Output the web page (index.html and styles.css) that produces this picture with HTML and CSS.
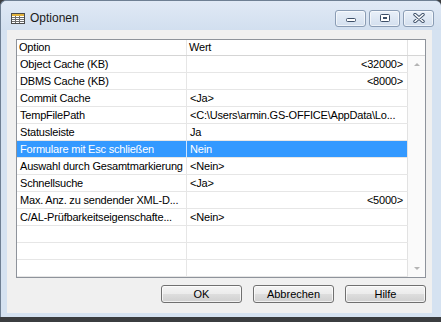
FILE: index.html
```html
<!DOCTYPE html>
<html lang="de">
<head>
  <meta charset="UTF-8">
  <title>Optionen</title>
  <link rel="stylesheet" href="styles.css">
</head>
<body>

<div class="window">
  <div class="titlebar">
    <svg class="app-icon" width="14" height="11" viewBox="0 0 14 11">
      <rect x="0.5" y="0.5" width="13" height="10" fill="#fff" stroke="#4b4b4b"/>
      <rect x="1" y="1" width="12" height="2" fill="#e2b23c"/>
      <path d="M1 4.5H13M1 6.5H13M1 8.5H13M4.5 3V10M8.5 3V10" stroke="#6d6d6d" stroke-width="1"/>
    </svg>
    <span class="title">Optionen</span>
    <div class="caption-buttons">
      <div class="cap-btn">
        <svg width="12" height="10" viewBox="0 0 12 10">
          <rect x="1.5" y="5.5" width="9" height="3" rx="1" fill="#fff" stroke="#3d4f68"/>
        </svg>
      </div>
      <div class="cap-btn">
        <svg width="12" height="10" viewBox="0 0 12 10">
          <rect x="1.5" y="1.5" width="9" height="7" rx="1" fill="#fff" stroke="#3d4f68"/>
          <rect x="4" y="4" width="4" height="2" fill="#3d4f68"/>
        </svg>
      </div>
      <div class="cap-btn">
        <svg width="14" height="10" viewBox="0 0 14 10">
          <path d="M3 1.5L11 8.5M11 1.5L3 8.5" stroke="#3d4f68" stroke-width="3.4" stroke-linecap="round"/>
          <path d="M3 1.5L11 8.5M11 1.5L3 8.5" stroke="#fff" stroke-width="1.6" stroke-linecap="round"/>
        </svg>
      </div>
    </div>
  </div>

  <div class="client">
    <div class="grid">
      <div class="grid-head">
        <div class="cell col-option">Option</div>
        <div class="cell col-value">Wert</div>
        <div class="cell col-scroll"></div>
      </div>
      <div class="grid-body">
        <div class="rows">
          <div class="row"><div class="cell col-option">Object Cache (KB)</div><div class="cell col-value num">&lt;32000&gt;</div></div>
          <div class="row"><div class="cell col-option">DBMS Cache (KB)</div><div class="cell col-value num">&lt;8000&gt;</div></div>
          <div class="row"><div class="cell col-option">Commit Cache</div><div class="cell col-value">&lt;Ja&gt;</div></div>
          <div class="row"><div class="cell col-option">TempFilePath</div><div class="cell col-value">&lt;C:\Users\armin.GS-OFFICE\AppData\Lo...</div></div>
          <div class="row"><div class="cell col-option">Statusleiste</div><div class="cell col-value">Ja</div></div>
          <div class="row selected"><div class="cell col-option">Formulare mit Esc schließen</div><div class="cell col-value">Nein</div></div>
          <div class="row"><div class="cell col-option">Auswahl durch Gesamtmarkierung</div><div class="cell col-value">&lt;Nein&gt;</div></div>
          <div class="row"><div class="cell col-option">Schnellsuche</div><div class="cell col-value">&lt;Ja&gt;</div></div>
          <div class="row"><div class="cell col-option">Max. Anz. zu sendender XML-D...</div><div class="cell col-value num">&lt;5000&gt;</div></div>
          <div class="row"><div class="cell col-option">C/AL-Prüfbarkeitseigenschafte...</div><div class="cell col-value">&lt;Nein&gt;</div></div>
          <div class="row"><div class="cell col-option"></div><div class="cell col-value"></div></div>
          <div class="row"><div class="cell col-option"></div><div class="cell col-value"></div></div>
          <div class="row"><div class="cell col-option"></div><div class="cell col-value"></div></div>
        </div>
        <div class="scrollbar">
          <div class="scroll-btn"><span class="arrow up"></span></div>
          <div class="scroll-btn"><span class="arrow down"></span></div>
        </div>
      </div>
    </div>

    <div class="buttons">
      <button class="btn">OK</button>
      <button class="btn">Abbrechen</button>
      <button class="btn">Hilfe</button>
    </div>
  </div>
</div>

</body>
</html>
```

FILE: styles.css
```css
* {
  margin: 0;
  padding: 0;
  box-sizing: border-box;
}

body {
  width: 441px;
  height: 322px;
  overflow: hidden;
  background-color: #3b3d40;
  font-family: "Liberation Sans", Arial, sans-serif;
  font-size: 11px;
  color: #000;
}

.window {
  width: 441px;
  height: 317px;
  background-color: #d5e2f1;
  border-top: 1px solid #6e7f93;
  border-left: 1px solid #6e7f93;
  border-radius: 6px 6px 0 0;
  display: flex;
  flex-direction: column;
}

/* Titelleiste */
.titlebar {
  height: 29px;
  padding: 5px 7px 0 10px;
  display: flex;
  align-items: center;
  background: linear-gradient(#e0e9f5, #d2dfef);
  border-radius: 6px 6px 0 0;
}

.app-icon {
  flex: none;
}

.title {
  margin-left: 5px;
  font-size: 12px;
  color: #1a1a1a;
}

.caption-buttons {
  margin-left: auto;
  display: flex;
  gap: 3px;
}

.cap-btn {
  width: 31px;
  height: 17px;
  border: 1px solid #8a9cb4;
  border-radius: 3px;
  background: linear-gradient(#e9f0f9, #d3dfee);
  box-shadow: inset 0 0 0 1px rgba(255, 255, 255, .6);
  display: flex;
  align-items: center;
  justify-content: center;
}

/* Inhalt */
.client {
  flex: 1;
  margin: 0 9px 4px 6px;
  padding: 9px 6px 0 9px;
  background-color: #f0f0f0;
  display: flex;
  flex-direction: column;
}

.grid {
  height: 239px;
  border: 1px solid #8e939b;
  background-color: #fff;
  display: flex;
  flex-direction: column;
  overflow: hidden;
}

.grid-head {
  height: 16px;
  display: flex;
  border-bottom: 1px solid #d5d5d5;
}

.grid-head .cell {
  padding-left: 2px;
  line-height: 15px;
}

.grid-body {
  flex: 1;
  display: flex;
}

.rows {
  width: 391px;
}

.row {
  height: 17px;
  display: flex;
  border-bottom: 1px solid #e6e6e6;
}

.cell {
  padding-left: 3px;
  line-height: 16px;
  letter-spacing: -0.2px;
  white-space: nowrap;
  overflow: hidden;
}

.col-option {
  width: 170px;
  border-right: 1px solid #e6e6e6;
}

.col-value {
  width: 221px;
  border-right: 1px solid #e2e2e2;
}

.col-value.num {
  text-align: right;
  padding-right: 4px;
}

.col-scroll {
  width: 17px;
}

.row.selected {
  background-color: #3399ff;
  color: #fff;
}

.row.selected .col-option {
  border-right-color: #cfe5ff;
}

.scrollbar {
  width: 17px;
  background-color: #fafafa;
  display: flex;
  flex-direction: column;
  justify-content: space-between;
}

.scroll-btn {
  height: 17px;
  display: flex;
  align-items: center;
  justify-content: center;
}

.arrow {
  width: 0;
  height: 0;
  border-left: 3px solid transparent;
  border-right: 3px solid transparent;
}

.arrow.up {
  border-bottom: 3px solid #b4b4b4;
}

.arrow.down {
  border-top: 3px solid #b4b4b4;
}

/* Schaltflächen */
.buttons {
  margin-top: 7px;
  display: flex;
  justify-content: flex-end;
  gap: 11px;
}

.btn {
  width: 81px;
  height: 18px;
  border: 1px solid #707070;
  border-radius: 3px;
  background: linear-gradient(#f4f4f4 0%, #ebebeb 50%, #dddddd 51%, #d0d0d0 100%);
  box-shadow: inset 0 0 0 1px rgba(255, 255, 255, .7);
  font-family: "Liberation Sans", Arial, sans-serif;
  font-size: 11px;
  color: #000;
  line-height: 15px;
}
```
